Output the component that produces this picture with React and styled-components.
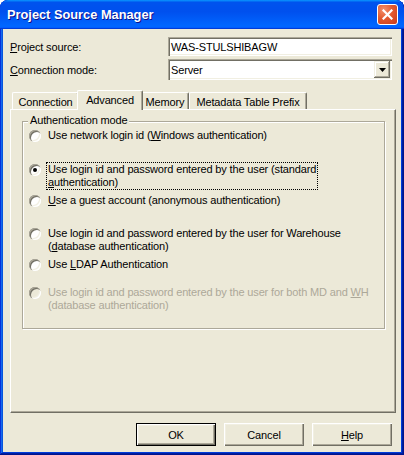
import React from "react";
import styled, { createGlobalStyle } from "styled-components";

const GlobalStyle = createGlobalStyle`
  html, body {
    margin: 0;
    padding: 0;
    background: #fff;
  }
  body {
    font-family: "Liberation Sans", Arial, sans-serif;
    font-size: 11px;
    letter-spacing: -0.15px;
    color: #000;
  }
`;

const Window = styled.div`
  width: 404px;
  height: 455px;
  box-sizing: border-box;
  display: flex;
  flex-direction: column;
  padding: 0 3px 3px 3px;
  border-radius: 8px 8px 0 0;
  overflow: hidden;
  background-color: #0831d9;
  box-shadow: inset -1px -1px #00138c, inset 1px 1px #0831d9,
    inset -2px -2px #001ea0, inset 2px 2px #166aee, inset -3px -3px #003bda,
    inset 3px 3px #0855dd;
`;

const TitleBar = styled.div`
  flex-shrink: 0;
  height: 29px;
  margin: 0 -3px;
  padding: 0 6px 0 7px;
  display: flex;
  align-items: center;
  justify-content: space-between;
  border-radius: 8px 8px 0 0;
  background: linear-gradient(
    180deg,
    #0997ff,
    #0053ee 8%,
    #0050ee 40%,
    #06f 88%,
    #06f 93%,
    #005bff 95%,
    #003dd7 96%,
    #003dd7
  );
`;

const Title = styled.span`
  font-weight: bold;
  font-size: 12.8px;
  letter-spacing: 0;
  color: #fff;
  text-shadow: 1px 1px #0f1089;
`;

const CloseButton = styled.div`
  width: 21px;
  height: 21px;
  box-sizing: border-box;
  border: 1px solid #fff;
  border-radius: 3px;
  background: radial-gradient(circle at 30% 25%, #f3906c 0%, #e35a30 45%, #c8391a 100%);
  display: flex;
  align-items: center;
  justify-content: center;
`;

const Client = styled.div`
  flex: 1;
  background: #ece9d8;
  display: flex;
  flex-direction: column;
  padding: 8px 5px 0 7px;
`;

const FieldRow = styled.div`
  display: flex;
  align-items: center;
  justify-content: space-between;
  margin-top: ${(p) => p.$gap}px;
  margin-right: 4px;
`;

const Sunken = styled.div`
  width: 224px;
  height: ${(p) => p.$h}px;
  box-sizing: border-box;
  background: #fff;
  box-shadow: inset 1px 1px #aca899, inset 2px 2px #716f64,
    inset -1px -1px #fff, inset -2px -2px #f1efe2;
  display: flex;
  align-items: center;
  padding: 0 2px 0 3px;
`;

const DropButton = styled.div`
  margin-left: auto;
  width: 16px;
  height: ${(p) => p.$h}px;
  background: #ece9d8;
  box-shadow: inset -1px -1px #716f64, inset 1px 1px #f1efe2,
    inset -2px -2px #aca899, inset 2px 2px #fff;
  display: flex;
  align-items: center;
  justify-content: center;
`;

const TabStrip = styled.div`
  display: flex;
  align-items: flex-end;
  height: 19px;
  padding-left: 2px;
  margin-top: 10px;
`;

const Tab = styled.div`
  box-sizing: border-box;
  width: ${(p) => (p.$active ? p.$w + 4 : p.$w)}px;
  height: ${(p) => (p.$active ? 20 : 17)}px;
  margin: 0 ${(p) => (p.$active ? -2 : 0)}px
    ${(p) => (p.$active ? -1 : 0)}px;
  position: relative;
  z-index: ${(p) => (p.$active ? 1 : 0)};
  background: #ece9d8;
  border-top: 1px solid #fff;
  border-left: 1px solid #fff;
  border-right: 1px solid #716f64;
  box-shadow: inset -1px 0 #aca899;
  border-radius: 2px 2px 0 0;
  display: flex;
  align-items: center;
  justify-content: center;
  padding-top: ${(p) => (p.$active ? 0 : 1)}px;
  padding-bottom: ${(p) => (p.$active ? 1 : 0)}px;
`;

const Panel = styled.div`
  height: 304px;
  box-sizing: border-box;
  border-top: 1px solid #fff;
  border-left: 1px solid #fff;
  border-right: 1px solid #716f64;
  border-bottom: 1px solid #716f64;
  box-shadow: inset -1px -1px #aca899;
  padding: 11px 0 0 11px;
`;

const GroupBox = styled.div`
  position: relative;
  width: 363px;
  height: 208px;
  box-sizing: border-box;
  border: 1px solid #aca899;
  box-shadow: inset 1px 1px #fff, 1px 1px #fff;
  padding: 6px 0 0 6px;
`;

const GroupTitle = styled.span`
  position: absolute;
  top: -8px;
  left: 5px;
  padding: 0 2px;
  line-height: 13px;
  background: #ece9d8;
`;

const RadioRow = styled.div`
  display: flex;
  align-items: flex-start;
  margin-top: ${(p) => p.$gap}px;
  color: ${(p) => (p.$disabled ? "#aca899" : "#000")};
`;

const RadioCircle = styled.span`
  position: relative;
  flex-shrink: 0;
  width: 12px;
  height: 12px;
  margin-top: 2px;
  margin-right: 5px;
  border-radius: 50%;
  background: ${(p) => (p.$disabled ? "#ece9d8" : "#fff")};
  box-shadow: inset 1px 1px #aca899, inset 2px 2px #716f64,
    inset -1px -1px #fff, inset -2px -2px #f1efe2;

  &::after {
    content: "";
    display: ${(p) => (p.$checked ? "block" : "none")};
    position: absolute;
    left: 4px;
    top: 4px;
    width: 4px;
    height: 4px;
    border-radius: 50%;
    background: #000;
  }
`;

const RadioText = styled.span`
  line-height: 13px;
  white-space: nowrap;
  padding: 0 1px;
  border: 1px dotted ${(p) => (p.$focus ? "#000" : "transparent")};
`;

const ButtonRow = styled.div`
  display: flex;
  justify-content: flex-end;
  gap: 8px;
  margin-top: 10px;
  margin-right: 4px;
`;

const Button = styled.div`
  width: 80px;
  height: 23px;
  box-sizing: border-box;
  background: #ece9d8;
  display: flex;
  align-items: center;
  justify-content: center;
  border: ${(p) => (p.$default ? "1px solid #000" : "none")};
  box-shadow: inset 1px 1px #fff, inset -1px -1px #716f64,
    inset -2px -2px #aca899, inset 2px 2px #f1efe2;
`;

const tabs = [
  { label: "Connection", w: 67 },
  { label: "Advanced", w: 62, active: true },
  { label: "Memory", w: 48 },
  { label: "Metadata Table Prefix", w: 118 },
];

export default function App() {
  return (
    <>
      <GlobalStyle />
      <Window>
        <TitleBar>
          <Title>Project Source Manager</Title>
          <CloseButton>
            <svg width="11" height="11" viewBox="0 0 11 11">
              <path
                d="M1.5 1.5 L9.5 9.5 M9.5 1.5 L1.5 9.5"
                stroke="#fff"
                strokeWidth="2.2"
                strokeLinecap="square"
              />
            </svg>
          </CloseButton>
        </TitleBar>
        <Client>
          <FieldRow $gap={0}>
            <span>
              <u>P</u>roject source:
            </span>
            <Sunken $h={19}>WAS-STULSHIBAGW</Sunken>
          </FieldRow>
          <FieldRow $gap={3}>
            <span>
              <u>C</u>onnection mode:
            </span>
            <Sunken $h={21}>
              Server
              <DropButton $h={17}>
                <svg width="7" height="4" viewBox="0 0 7 4">
                  <path d="M0 0h7L3.5 4z" fill="#000" />
                </svg>
              </DropButton>
            </Sunken>
          </FieldRow>
          <TabStrip>
            {tabs.map((t) => (
              <Tab key={t.label} $w={t.w} $active={t.active}>
                {t.label}
              </Tab>
            ))}
          </TabStrip>
          <Panel>
            <GroupBox>
              <GroupTitle>Authentication mode</GroupTitle>
              <RadioRow $gap={0}>
                <RadioCircle />
                <RadioText>
                  Use network login id (<u>W</u>indows authentication)
                </RadioText>
              </RadioRow>
              <RadioRow $gap={19}>
                <RadioCircle $checked />
                <RadioText $focus>
                  Use login id and password entered by the user (standard
                  <br />
                  <u>a</u>uthentication)
                </RadioText>
              </RadioRow>
              <RadioRow $gap={3}>
                <RadioCircle />
                <RadioText>
                  <u>U</u>se a guest account (anonymous authentication)
                </RadioText>
              </RadioRow>
              <RadioRow $gap={18}>
                <RadioCircle />
                <RadioText>
                  Use login id and password entered by the user for Warehouse
                  <br />(<u>d</u>atabase authentication)
                </RadioText>
              </RadioRow>
              <RadioRow $gap={3}>
                <RadioCircle />
                <RadioText>
                  Use <u>L</u>DAP Authentication
                </RadioText>
              </RadioRow>
              <RadioRow $gap={13} $disabled>
                <RadioCircle $disabled />
                <RadioText>
                  Use login id and password entered by the user for both MD and{" "}
                  <u>W</u>H
                  <br />
                  (database authentication)
                </RadioText>
              </RadioRow>
            </GroupBox>
          </Panel>
          <ButtonRow>
            <Button $default>OK</Button>
            <Button>Cancel</Button>
            <Button>
              <span>
                <u>H</u>elp
              </span>
            </Button>
          </ButtonRow>
        </Client>
      </Window>
    </>
  );
}
